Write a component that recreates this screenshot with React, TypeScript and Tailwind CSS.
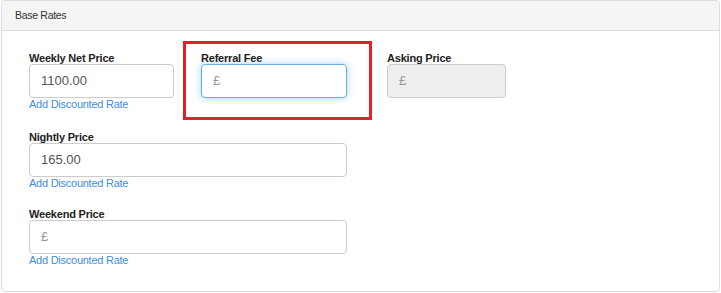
import React from 'react';

const font = { fontFamily: '"Liberation Sans", Arial, sans-serif' };

function Field({ label, value, placeholder, width, focused, disabled, link }: {
  label: string;
  value?: string;
  placeholder?: string;
  width: string;
  focused?: boolean;
  disabled?: boolean;
  link?: boolean;
}) {
  return (
    <div className={width}>
      <label className="block text-[11px] leading-[12px] font-bold tracking-[-0.2px] text-[#222]">{label}</label>
      <div
        className={`h-[34px] rounded-[4px] border px-[11px] flex items-center text-[13px] ${
          focused
            ? 'border-[#66afe9] shadow-[0_0_7px_rgba(102,175,233,0.6)] bg-white'
            : disabled
            ? 'border-[#ccc] bg-[#eee]'
            : 'border-[#ccc] bg-white'
        }`}
      >
        {value ? (
          <span className="text-[#555]">{value}</span>
        ) : (
          <span className="text-[#999]">{placeholder}</span>
        )}
      </div>
      {link && (
        <a className="block text-[11px] leading-[13px] tracking-[-0.25px] text-[#3f8ee0] cursor-pointer">Add Discounted Rate</a>
      )}
    </div>
  );
}

export default function App() {
  return (
    <div className="w-[721px] h-[293px] bg-white pl-[1px]" style={font}>
      <div className="w-[719px] h-[292px] border border-[#ddd] rounded-[4px] overflow-hidden">
        {/* Header */}
        <div className="h-[30px] bg-[#f5f5f5] border-b border-[#ddd] px-[13px] flex items-center text-[10.5px] tracking-[-0.3px] text-[#333]">
          Base Rates
        </div>

        {/* Body */}
        <div className="pl-[27px] pt-[10px]">
          <div className="flex items-start">
            <div className="mt-[11px]">
              <Field label="Weekly Net Price" value="1100.00" width="w-[145px]" link />
            </div>
            <div className="ml-[9px] border-[3px] border-[#e3202a] pt-[8px] pl-[15px] pr-[22px] pb-[19px]">
              <Field label="Referral Fee" placeholder="£" width="w-[146px]" focused />
            </div>
            <div className="ml-[15px] mt-[11px]">
              <Field label="Asking Price" placeholder="£" width="w-[119px]" disabled />
            </div>
          </div>

          <div className="mt-[11px]">
            <Field label="Nightly Price" value="165.00" width="w-[318px]" link />
          </div>

          <div className="mt-[18px]">
            <Field label="Weekend Price" placeholder="£" width="w-[318px]" link />
          </div>
        </div>
      </div>
    </div>
  );
}
